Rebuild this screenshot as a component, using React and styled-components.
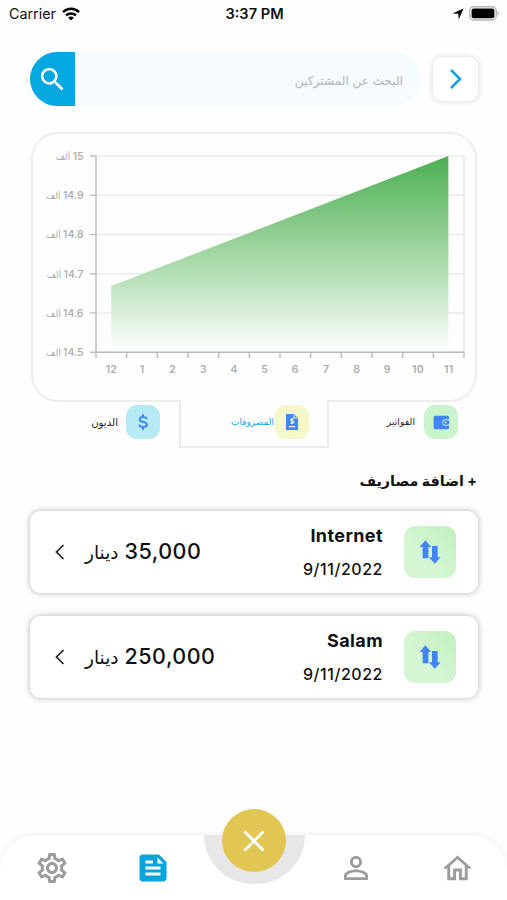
import React from 'react';
import styled, { createGlobalStyle } from 'styled-components';
import { MdSearch, MdOutlineSettings, MdFeed, MdPersonOutline, MdOutlineHome } from 'react-icons/md';

const months = ['12', '1', '2', '3', '4', '5', '6', '7', '8', '9', '10', '11'];
const levels = ['15', '14.9', '14.8', '14.7', '14.6', '14.5'];

const expenses = [
    { name: 'Internet', date: '9/11/2022', amount: '35,000' },
    { name: 'Salam', date: '9/11/2022', amount: '250,000' },
];

const StatusBar = () => (
    <Status>
        <Carrier>
            <span>Carrier</span>
            <svg width="18" height="14" viewBox="0 0 18 14" fill="none" stroke="#000" strokeWidth="2.5">
                <path d="M1 5.1a11.4 11.4 0 0 1 16 0" />
                <path d="M4 8.4a7.2 7.2 0 0 1 10 0" />
                <path d="M9 13.6 6.2 10.8a4 4 0 0 1 5.6 0z" fill="#000" stroke="none" />
            </svg>
        </Carrier>
        <Time>3:37 PM</Time>
        <Indicators>
            <svg width="12" height="12" viewBox="0 0 12 12"><path d="M11.6.5 6.7 11.4 6.3 5.8.4 5.5z" fill="#000" /></svg>
            <svg width="31" height="15" viewBox="0 0 31 15">
                <rect x="0.8" y="0.8" width="26.4" height="13.2" rx="4" fill="#fff" stroke="#b5b5b5" strokeWidth="1.4" />
                <rect x="2.6" y="2.6" width="22.8" height="9.6" rx="2" fill="#000" />
                <path d="M28.5 5v5c1.8-.7 1.8-4.3 0-5z" fill="#b5b5b5" />
            </svg>
        </Indicators>
    </Status>
);

const Chart = () => {
    const step = 368 / 12;
    const rowY = (i) => 156 + i * 39.25;
    return (
        <ChartSvg viewBox="33 134 442 266">
            <defs>
                <linearGradient id="area" x1="0" y1="0" x2="0" y2="1">
                    <stop offset="0" stopColor="#4caf50" />
                    <stop offset="0.62" stopColor="#b7e0b8" />
                    <stop offset="1" stopColor="#ffffff" />
                </linearGradient>
            </defs>
            {levels.map((level, i) => (
                <g key={level}>
                    <path d={`M96 ${rowY(i)}H464`} stroke="#ebebeb" strokeWidth="1.3" />
                    <path d={`M90 ${rowY(i)}H96`} stroke="#b8b8b8" strokeWidth="1.3" />
                    <AxisText x="83.5" y={rowY(i) + 3.8}>{level}<ArabicSpan> ألف</ArabicSpan></AxisText>
                </g>
            ))}
            <path d="M464 156V352" stroke="#e4e4e4" strokeWidth="1.3" />
            <path d="M111.2 286 448.4 156V352H111.2Z" fill="url(#area)" />
            <path d="M96 155.4V352.3H464" stroke="#b8b8b8" strokeWidth="1.4" fill="none" />
            {months.map((month, i) => (
                <g key={month}>
                    <path d={`M${96 + i * step} 352v6`} stroke="#b8b8b8" strokeWidth="1.3" />
                    <MonthText x={96 + (i + 0.5) * step} y="373">{month}</MonthText>
                </g>
            ))}
            <path d="M464 352v6" stroke="#b8b8b8" strokeWidth="1.3" />
        </ChartSvg>
    );
};

const DollarIcon = () => (
    <svg width="14" height="18" viewBox="0 0 14 18" fill="none" stroke="#4285f4" strokeWidth="2">
        <path d="M10.8 6C10.4 4.6 9 4 7.1 4 5.1 4 3.7 4.9 3.7 6.4c0 3.5 7.2 1.4 7.2 5.1 0 1.6-1.6 2.5-3.8 2.5S3.5 13.2 3.2 11.6M7 1.3V4M7 14v2.7" />
    </svg>
);

const InvoiceIcon = () => (
    <svg width="14" height="18" viewBox="0 0 14 18">
        <path d="M1 1h8l4 4v12H1z" fill="#4285f4" />
        <path d="M9.2 1.8v3.1h3.2" fill="none" stroke="#f4f8c4" />
        <path d="M9 6.2C7.8 5.4 5.7 5.7 5.7 7c0 1.4 3.1.8 3.1 2.2 0 1.2-2.2 1.4-3.5.5M7.2 4.8v6.5M3.8 13.6h6.6" fill="none" stroke="#e7f1dc" strokeWidth="1.2" />
    </svg>
);

const WalletIcon = () => (
    <svg width="17" height="15" viewBox="0 0 17 15">
        <path d="M2.4.8h12q1.8 0 1.8 1.8v1.7h-3.8q-3 0-3 3.2t3 3.2h3.8v1.7q0 1.8-1.8 1.8h-12q-1.8 0-1.8-1.8V2.6Q.6.8 2.4.8z" fill="#4285f4" />
        <rect x="10.2" y="5.2" width="6.3" height="4.6" rx="2" fill="#4285f4" />
        <circle cx="12.6" cy="7.5" r="1" fill="#cdf3d0" />
    </svg>
);

const ArrowsIcon = () => (
    <svg width="22" height="24" viewBox="0 0 22 24" fill="#4285f4">
        <path d="M6.4.2 12.2 7H9.4v11.2H3.6V7H.6z" />
        <path d="M15.8 23.8 10 17.2h3V6h5.7v11.2h2.9z" />
    </svg>
);

const App = () => (
    <Screen>
        <GlobalStyle />
        <StatusBar />
        <SearchRow>
            <SearchButton aria-label="search"><MdSearch size={31} /></SearchButton>
            <SearchField>البحث عن المشتركين</SearchField>
            <NextButton aria-label="next">
                <svg width="14" height="22" viewBox="0 0 14 22" fill="none" stroke="#08a4dc" strokeWidth="2.5">
                    <path d="m2 2 9 9-9 9" />
                </svg>
            </NextButton>
        </SearchRow>
        <ChartCard><Chart /></ChartCard>
        <Tabs>
            <Tab $gap="8px" $end="17px">
                <TabLabel $size="10.2px">الديون</TabLabel>
                <TabIcon $color="#b6ebf5"><DollarIcon /></TabIcon>
            </Tab>
            <Tab $active $gap="1px" $end="18px">
                <TabLabel $active $size="9px">المصروفات</TabLabel>
                <TabIcon $color="#f4f8c8"><InvoiceIcon /></TabIcon>
            </Tab>
            <Tab $gap="9px" $end="18px">
                <TabLabel $size="9.4px">الفواتير</TabLabel>
                <TabIcon $color="#caf4cc"><WalletIcon /></TabIcon>
            </Tab>
        </Tabs>
        <AddExpense>+ اضافة مصاريف</AddExpense>
        <List>
            {expenses.map((item) => (
                <Card key={item.name}>
                    <svg width="10" height="16" viewBox="0 0 10 16" fill="none" stroke="#222" strokeWidth="1.7">
                        <path d="M8.5 1 1.5 8l7 7" />
                    </svg>
                    <Amount>
                        <span>{item.amount}</span>
                        <Currency>دينار</Currency>
                    </Amount>
                    <Info>
                        <Name>{item.name}</Name>
                        <DateText>{item.date}</DateText>
                    </Info>
                    <CardIcon><ArrowsIcon /></CardIcon>
                </Card>
            ))}
        </List>
        <BottomNav>
            <NavItem><MdOutlineSettings size={36} /></NavItem>
            <NavItem $active><MdFeed size={36} /></NavItem>
            <NavItem />
            <NavItem><MdPersonOutline size={36} /></NavItem>
            <NavItem><MdOutlineHome size={35} /></NavItem>
            <Notch />
            <CloseButton aria-label="close">
                <svg width="22" height="22" viewBox="0 0 22 22" stroke="#fff" strokeWidth="2.8">
                    <path d="m1.5 1.5 19 19M20.5 1.5l-19 19" />
                </svg>
            </CloseButton>
        </BottomNav>
    </Screen>
);

const GlobalStyle = createGlobalStyle`
* {
    box-sizing: border-box;
}
body {
    margin: 0;
    background: #fefefe;
}
button {
    border: 0;
    padding: 0;
}
`;

const Screen = styled.div`
width: 507px;
height: 900px;
display: flex;
flex-direction: column;
overflow: hidden;
background: #fefefe;
color: #111;
font-family: Inter, 'DejaVu Sans', sans-serif;
`;

const Status = styled.header`
height: 27px;
display: grid;
grid-template-columns: 1fr auto 1fr;
align-items: center;
padding: 0 7px 0 9px;
font-size: 15px;
`;

const Carrier = styled.div`
display: flex;
align-items: center;
gap: 6px;
font-size: 14.3px;
`;

const Time = styled.div`
font-weight: 600;
font-size: 14.6px;
`;

const Indicators = styled.div`
display: flex;
justify-content: flex-end;
align-items: center;
gap: 5px;
`;

const SearchRow = styled.div`
height: 54px;
display: flex;
align-items: center;
margin: 25px 29px 0 30px;
`;

const SearchButton = styled.button`
width: 45px;
height: 54px;
display: flex;
align-items: center;
justify-content: center;
border-radius: 27px 0 0 27px;
background: #04a8e0;
color: #fff;
`;

const SearchField = styled.div`
flex: 1;
height: 54px;
display: flex;
align-items: center;
direction: rtl;
padding: 2px 17px 0;
margin-right: 13px;
border-radius: 0 27px 27px 0;
background: #f5fbfe;
color: #b3b5b6;
font-size: 12.2px;
`;

const NextButton = styled.button`
width: 45px;
height: 44px;
display: flex;
align-items: center;
justify-content: center;
border-radius: 9px;
background: #fff;
box-shadow: 0 0 6px rgba(0, 0, 0, 0.16);
`;

const ChartCard = styled.section`
height: 270px;
flex-shrink: 0;
margin: 26px 30px 0 31px;
border: 2px solid #ededed;
border-radius: 27px;
`;

const ChartSvg = styled.svg`
display: block;
width: 442px;
height: 266px;
`;

const AxisText = styled.text`
direction: rtl;
font-size: 10.5px;
font-weight: 500;
letter-spacing: 0.3px;
fill: #aaa;
`;

const ArabicSpan = styled.tspan`
font-size: 9px;
letter-spacing: 0;
`;

const MonthText = styled.text`
text-anchor: middle;
font-size: 10.5px;
font-weight: 600;
letter-spacing: 0.2px;
fill: #aeaeae;
`;

const Tabs = styled.nav`
height: 48px;
display: grid;
grid-template-columns: 148px 150px 149px;
margin: -2px 29px 0 31px;
`;

const Tab = styled.div`
display: flex;
align-items: flex-start;
justify-content: flex-end;
gap: ${({ $gap }) => $gap};
padding: 5px ${({ $end }) => $end} 0 0;
border: 2px solid ${({ $active }) => ($active ? '#ebebeb' : 'transparent')};
border-top: 0;
background: ${({ $active }) => ($active ? '#fefefe' : 'transparent')};
`;

const TabLabel = styled.span`
line-height: 34px;
font-size: ${({ $size }) => $size};
color: ${({ $active }) => ($active ? '#12a8e0' : '#222')};
`;

const TabIcon = styled.div`
width: 34px;
height: 34px;
display: flex;
align-items: center;
justify-content: center;
border-radius: 11px;
background: ${({ $color }) => $color};
`;

const AddExpense = styled.div`
height: 63px;
line-height: 66px;
direction: rtl;
margin-right: 30px;
font-size: 14.3px;
font-weight: 700;
`;

const List = styled.div`
display: flex;
flex-direction: column;
gap: 23px;
padding: 0 29px 0 30px;
`;

const Card = styled.article`
height: 82px;
display: flex;
align-items: center;
padding: 0 22px 0 25px;
border-radius: 11px;
background: #fff;
box-shadow: 0 0 6px rgba(0, 0, 0, 0.3);
`;

const Amount = styled.div`
display: flex;
direction: rtl;
align-items: baseline;
gap: 6px;
margin: 0 0 3px 20px;
font-size: 21.5px;
font-weight: 500;
letter-spacing: 0.5px;
`;

const Currency = styled.span`
font-size: 18.5px;
font-weight: 400;
letter-spacing: 0;
`;

const Info = styled.div`
flex: 1;
display: flex;
flex-direction: column;
align-items: flex-end;
gap: 13px;
margin-right: 21px;
line-height: 21px;
`;

const Name = styled.div`
font-size: 18px;
font-weight: 700;
letter-spacing: 0.4px;
`;

const DateText = styled.div`
font-size: 16px;
font-weight: 500;
letter-spacing: 0.55px;
`;

const CardIcon = styled.div`
width: 52px;
height: 52px;
display: flex;
align-items: center;
justify-content: center;
border-radius: 11px;
background: linear-gradient(225deg, #c1f0bd, #d5f6d3 60%);
`;

const BottomNav = styled.footer`
position: relative;
height: 65px;
display: grid;
grid-template-columns: repeat(5, 1fr);
margin-top: auto;
border-radius: 36px 36px 0 0;
background: #fff;
box-shadow: 0 -1px 7px rgba(0, 0, 0, 0.06);
`;

const NavItem = styled.div`
display: flex;
align-items: center;
justify-content: center;
padding: 1px 0 0 2px;
color: ${({ $active }) => ($active ? '#08a4dc' : '#9c9c9c')};
`;

const Notch = styled.div`
position: absolute;
left: 204px;
top: 0;
width: 101px;
height: 49px;
border-radius: 0 0 50px 50px;
background: #e7e7e7;
`;

const CloseButton = styled.button`
position: absolute;
left: 222px;
top: -26px;
width: 64px;
height: 63px;
display: flex;
align-items: center;
justify-content: center;
border-radius: 50%;
background: #e1c653;
`;

export default App;
